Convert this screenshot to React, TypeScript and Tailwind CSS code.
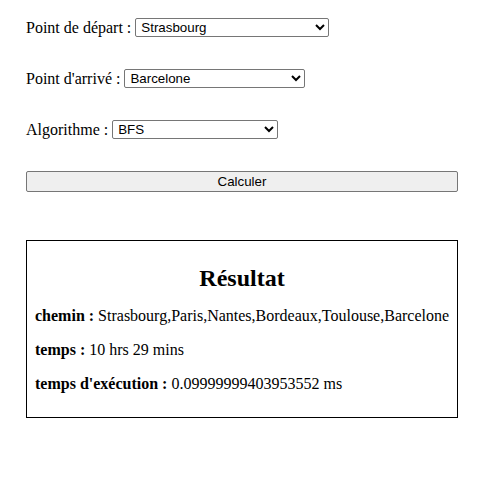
import React from "react";

const SELECT_CLS =
  "h-[19px] bg-white border border-[#767676] rounded-[2px] pl-[1px] text-[13.33px] text-black font-['Liberation_Sans',Arial,sans-serif]";

function Field({ label, value, width }: { label: string; value: string; width: string }) {
  return (
    <div className="flex items-center h-[19px] gap-[4px]">
      <span className="leading-[19px]">{label}</span>
      <select className={`${SELECT_CLS} ${width}`} defaultValue={value}>
        <option>{value}</option>
      </select>
    </div>
  );
}

export default function App() {
  return (
    <div className="min-h-[493px] bg-white text-black text-[16px] font-['Liberation_Serif','Times_New_Roman',serif]">
      <div className="ml-[26px] w-[432px] pt-[18px] flex flex-col">
        <div className="flex flex-col gap-[32px]">
          <Field label="Point de départ :" value="Strasbourg" width="w-[194px]" />
          <Field label="Point d'arrivé :" value="Barcelone" width="w-[181px]" />
          <Field label="Algorithme :" value="BFS" width="w-[166px]" />
          <button className="h-[21px] w-full bg-[#efefef] border border-[#767676] rounded-[2px] text-[13.33px] font-['Liberation_Sans',Arial,sans-serif]">
            Calculer
          </button>
        </div>

        <div className="mt-[48px] border border-black px-[8px] pt-[23px] pb-[24px]">
          <h2 className="text-center text-[24px] font-bold leading-[28px]">Résultat</h2>
          <div className="mt-[15px] flex flex-col gap-[16px] leading-[18px] whitespace-nowrap">
            <p>
              <b>chemin :</b> Strasbourg,Paris,Nantes,Bordeaux,Toulouse,Barcelone
            </p>
            <p>
              <b>temps :</b> 10 hrs 29 mins
            </p>
            <p>
              <b>temps d'exécution :</b> 0.09999999403953552 ms
            </p>
          </div>
        </div>
      </div>
    </div>
  );
}
